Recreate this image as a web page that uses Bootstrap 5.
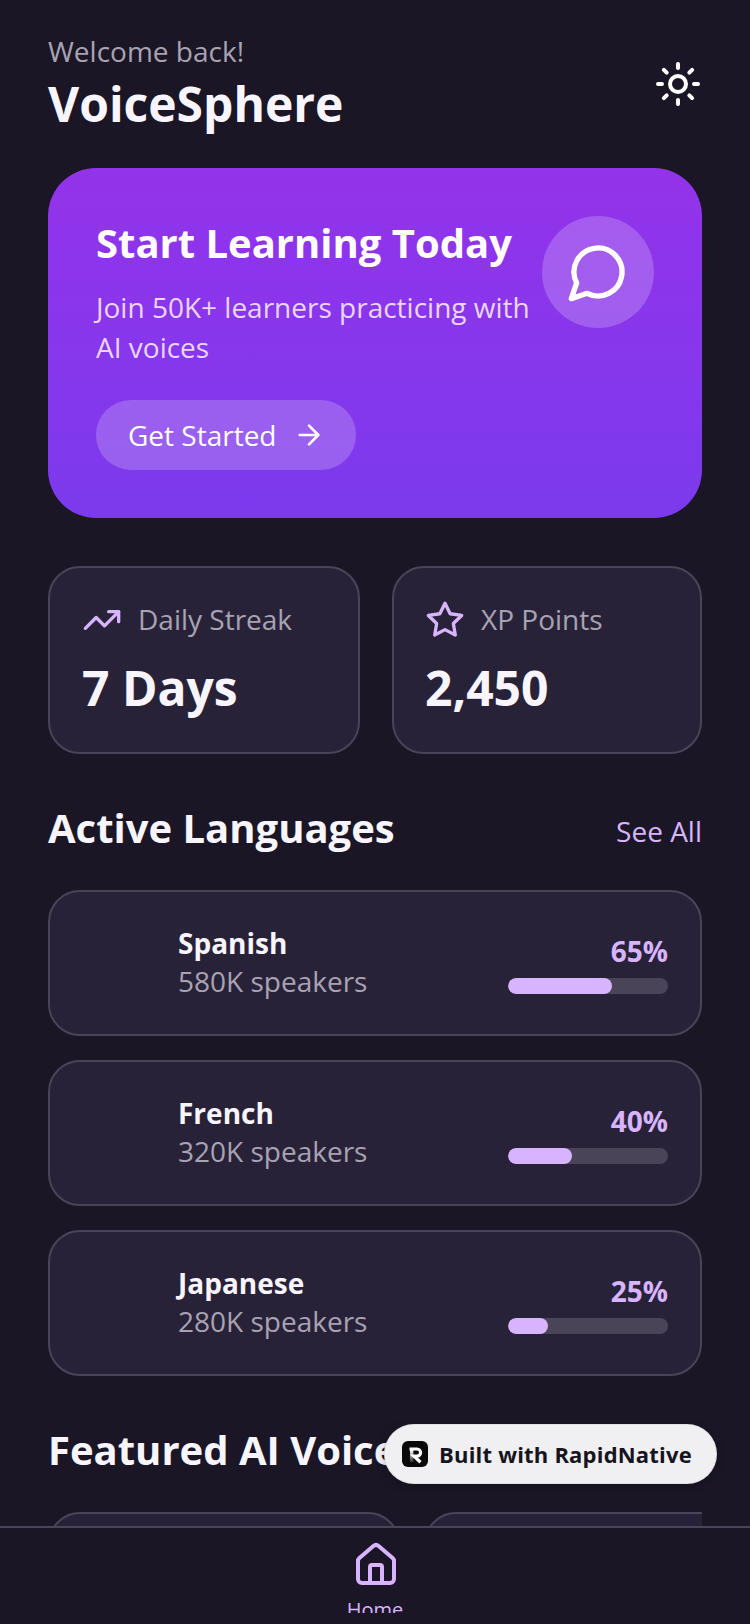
<!DOCTYPE html>
<html lang="en">

<head>
    <meta charset="UTF-8">
    <meta name="viewport" content="width=device-width, initial-scale=1.0">
    <title>VoiceSphere</title>
    <link href="https://cdn.jsdelivr.net/npm/bootstrap@5.3.2/dist/css/bootstrap.min.css" rel="stylesheet">
    <style>
        html,
        body {
            height: 100%;
        }

        body {
            background: #1a1625;
            color: #f8f5ff;
            font-family: "Open Sans", sans-serif;
            overflow: hidden;
        }

        svg {
            display: block;
            flex: none;
            fill: none;
            stroke: currentColor;
            stroke-width: 2;
            stroke-linecap: round;
            stroke-linejoin: round;
        }

        .app-shell {
            height: 1624px;
        }

        .scroll-area {
            flex: 1;
            min-height: 0;
            overflow: hidden;
            padding: 31px 48px 0;
        }

        .muted-text {
            color: #a8a3b3;
            font-size: 28px;
            line-height: 40px;
        }

        .lang-sub {
            line-height: 38px;
        }

        .brand-title {
            font-size: 48px;
            font-weight: 700;
            line-height: 64px;
            margin-top: 1px;
        }

        .hero-card {
            background: linear-gradient(180deg, #9333ea, #7c3aed);
            border-radius: 48px;
            padding: 48px;
            height: 350px;
            margin-top: 32px;
        }

        .hero-title {
            font-size: 40px;
            font-weight: 700;
            line-height: 54px;
            color: #fff;
        }

        .hero-sub {
            font-size: 28px;
            line-height: 40px;
            color: #e9d5ff;
            margin-top: 17px;
        }

        .hero-icon {
            width: 112px;
            height: 112px;
            background: rgba(255, 255, 255, .2);
            color: #fff;
        }

        .hero-btn {
            background: rgba(255, 255, 255, .2);
            color: #fff;
            border: 0;
            font-size: 28px;
            line-height: 38px;
            padding: 16px 31px 16px 32px;
            gap: 16px;
            margin-top: 33px;
        }

        .panel-card {
            background: #282238;
            border: 2px solid #4a4458;
            border-radius: 32px;
            color: inherit;
        }

        .stat-row {
            gap: 32px;
            margin-top: 48px;
        }

        .stat-card {
            flex: 1 1 0;
            height: 188px;
            padding: 32px 32px 32px 31px;
        }

        .stat-card:first-child {
            flex: 0 0 312px;
            padding-left: 32px;
        }

        .stat-head {
            gap: 16px;
            height: 40px;
        }

        .stat-head .muted-text {
            padding-bottom: 2px;
        }

        .accent-icon {
            color: #d8b4fe;
        }

        .stat-value {
            font-size: 48px;
            font-weight: 700;
            line-height: 64px;
            margin-top: 16px;
        }

        .section-head {
            margin-top: 48px;
            height: 56px;
        }

        .section-title {
            font-size: 40px;
            font-weight: 700;
            line-height: 52px;
            padding-bottom: 4px;
            margin: 0;
        }

        .see-all {
            color: #d8b4fe;
            font-size: 28px;
            padding-top: 2px;
            text-decoration: none;
        }

        .lang-list {
            gap: 24px;
            margin-top: 32px;
        }

        .lang-card {
            height: 146px;
            padding: 0 32px;
        }

        .lang-info {
            margin-left: 96px;
            padding-bottom: 3px;
        }

        .lang-name {
            font-size: 28px;
            font-weight: 700;
            line-height: 38px;
        }

        .lang-meter {
            width: 160px;
        }

        .lang-pct {
            color: #d8b4fe;
            font-size: 28px;
            font-weight: 700;
            line-height: 38px;
            margin-bottom: 8px;
        }

        .lang-track {
            height: 16px;
            background: #4a4458;
            border-radius: 8px;
        }

        .lang-track .progress-bar {
            background: #d8b4fe;
            border-radius: 8px;
        }

        .voice-row {
            gap: 24px;
            margin-top: 32px;
            overflow: hidden;
        }

        .voice-card {
            flex: none;
            width: 352px;
            height: 300px;
        }

        .tab-bar {
            height: 98px;
            border-top: 2px solid #4a4458;
            background: #1a1625;
            position: relative;
        }

        .tab-item {
            height: 85px;
            padding-top: 13px;
            overflow: hidden;
            color: #d8b4fe;
            font-size: 20px;
            line-height: 28px;
        }

        .tab-item svg {
            margin-left: 2px;
        }

        .tab-label {
            margin-top: 7px;
        }

        .built-pill {
            position: absolute;
            left: 384px;
            top: 1424px;
            width: 333px;
            height: 60px;
            background: #f0f0f2;
            border: 1px solid rgba(0, 0, 0, .06);
            color: #16141c;
            font-size: 22px;
            font-weight: 700;
            letter-spacing: .2px;
            gap: 11px;
            padding-left: 17px;
            box-shadow: 0 2px 10px rgba(0, 0, 0, .25);
        }

        .built-logo {
            width: 26px;
            height: 26px;
        }
    </style>
</head>

<body>

    <div class="app-shell d-flex flex-column">
        <main class="scroll-area">
            <!-- Header -->
            <div class="d-flex justify-content-between align-items-center">
                <div>
                    <div class="muted-text">Welcome back!</div>
                    <div class="brand-title">VoiceSphere</div>
                </div>
                <svg width="48" height="48" viewBox="0 0 24 24" class="text-white">
                    <circle cx="12" cy="12" r="4" />
                    <path d="M12 2v2M12 20v2M4.93 4.93l1.41 1.41M17.66 17.66l1.41 1.41M2 12h2M20 12h2M6.34 17.66l-1.41 1.41M19.07 4.93l-1.41 1.41" />
                </svg>
            </div>

            <!-- Hero -->
            <div class="hero-card">
                <div class="d-flex justify-content-between">
                    <div>
                        <div class="hero-title">Start Learning Today</div>
                        <div class="hero-sub">Join 50K+ learners practicing with<br>AI voices</div>
                    </div>
                    <div class="hero-icon rounded-circle d-flex align-items-center justify-content-center flex-shrink-0">
                        <svg width="64" height="64" viewBox="0 0 24 24">
                            <path d="M7.9 20A9 9 0 1 0 4 16.1L2 22Z" />
                        </svg>
                    </div>
                </div>
                <button class="hero-btn btn rounded-pill d-inline-flex align-items-center">
                    Get Started
                    <svg width="32" height="32" viewBox="0 0 24 24">
                        <path d="M5 12h14M12 5l7 7-7 7" />
                    </svg>
                </button>
            </div>

            <!-- Stats -->
            <div class="stat-row d-flex">
                <div class="panel-card stat-card">
                    <div class="stat-head d-flex align-items-center">
                        <svg class="accent-icon" width="40" height="40" viewBox="0 0 24 24">
                            <polyline points="22 7 13.5 15.5 8.5 10.5 2 17" />
                            <polyline points="16 7 22 7 22 13" />
                        </svg>
                        <span class="muted-text">Daily Streak</span>
                    </div>
                    <div class="stat-value">7 Days</div>
                </div>
                <div class="panel-card stat-card">
                    <div class="stat-head d-flex align-items-center">
                        <svg class="accent-icon" width="40" height="40" viewBox="0 0 24 24">
                            <polygon points="12 2 15.09 8.26 22 9.27 17 14.14 18.18 21.02 12 17.77 5.82 21.02 7 14.14 2 9.27 8.91 8.26 12 2" />
                        </svg>
                        <span class="muted-text">XP Points</span>
                    </div>
                    <div class="stat-value">2,450</div>
                </div>
            </div>

            <!-- Active languages -->
            <div class="section-head d-flex justify-content-between align-items-center">
                <h2 class="section-title">Active Languages</h2>
                <a href="#" class="see-all">See All</a>
            </div>
            <div class="lang-list d-flex flex-column">
                <div class="panel-card lang-card d-flex justify-content-between align-items-center">
                    <div class="lang-info">
                        <div class="lang-name">Spanish</div>
                        <div class="muted-text lang-sub">580K speakers</div>
                    </div>
                    <div class="lang-meter">
                        <div class="lang-pct text-end">65%</div>
                        <div class="lang-track progress">
                            <div class="progress-bar" style="width: 65%"></div>
                        </div>
                    </div>
                </div>
                <div class="panel-card lang-card d-flex justify-content-between align-items-center">
                    <div class="lang-info">
                        <div class="lang-name">French</div>
                        <div class="muted-text lang-sub">320K speakers</div>
                    </div>
                    <div class="lang-meter">
                        <div class="lang-pct text-end">40%</div>
                        <div class="lang-track progress">
                            <div class="progress-bar" style="width: 40%"></div>
                        </div>
                    </div>
                </div>
                <div class="panel-card lang-card d-flex justify-content-between align-items-center">
                    <div class="lang-info">
                        <div class="lang-name">Japanese</div>
                        <div class="muted-text lang-sub">280K speakers</div>
                    </div>
                    <div class="lang-meter">
                        <div class="lang-pct text-end">25%</div>
                        <div class="lang-track progress">
                            <div class="progress-bar" style="width: 25%"></div>
                        </div>
                    </div>
                </div>
            </div>

            <!-- Featured voices -->
            <div class="section-head d-flex align-items-center">
                <h2 class="section-title">Featured AI Voices</h2>
            </div>
            <div class="voice-row d-flex">
                <div class="panel-card voice-card"></div>
                <div class="panel-card voice-card"></div>
            </div>
        </main>

        <!-- Bottom tabs -->
        <nav class="tab-bar flex-shrink-0 d-flex justify-content-center">
            <div class="tab-item d-flex flex-column align-items-center">
                <svg width="48" height="48" viewBox="0 0 24 24">
                    <path d="M3 10a2 2 0 0 1 .709-1.528l7-5.999a2 2 0 0 1 2.582 0l7 5.999A2 2 0 0 1 21 10v9a2 2 0 0 1-2 2H5a2 2 0 0 1-2-2z" />
                    <path d="M15 21v-8a1 1 0 0 0-1-1h-4a1 1 0 0 0-1 1v8" />
                </svg>
                <span class="tab-label">Home</span>
            </div>
        </nav>
    </div>

    <!-- Floating badge -->
    <div class="built-pill rounded-pill d-flex align-items-center">
        <svg class="built-logo" viewBox="0 0 26 26">
            <defs>
                <linearGradient id="logoStem" x1="0" y1="0" x2="0" y2="1">
                    <stop offset="0" stop-color="#fff" />
                    <stop offset="1" stop-color="#fff" stop-opacity=".15" />
                </linearGradient>
            </defs>
            <rect x="0" y="0" width="26" height="26" rx="6" fill="#0a0a0a" stroke="none" />
            <path d="M7.5 8H15a3.6 3.6 0 0 1 0 7.2h-3l6.5 6" stroke="#fff" stroke-width="3.2" stroke-linejoin="miter" stroke-linecap="butt" />
            <rect x="8" y="9" width="3.4" height="12" fill="url(#logoStem)" stroke="none" />
        </svg>
        <span>Built with RapidNative</span>
    </div>

    <script src="https://cdn.jsdelivr.net/npm/bootstrap@5.3.2/dist/js/bootstrap.bundle.min.js"></script>
</body>

</html>
